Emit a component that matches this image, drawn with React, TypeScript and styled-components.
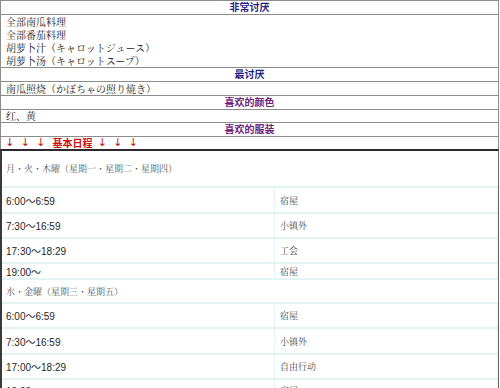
import React from 'react';
import styled, { createGlobalStyle } from 'styled-components';

const GlobalStyle = createGlobalStyle`
  html, body {
    margin: 0;
    padding: 0;
    background: #ffffff;
  }
  body {
    width: 500px;
    height: 388px;
    overflow: hidden;
  }
`;

const serif = `"Noto Serif CJK SC", "Noto Sans CJK SC", serif`;
const sans = `"Liberation Sans", "Noto Sans CJK SC", sans-serif`;

const Page = styled.div`
  width: 499px;
`;

const TopTable = styled.div`
  border: 1px solid #8c8c8c;
  border-bottom: none;
  display: flex;
  flex-direction: column;
`;

const HeadRow = styled.div<{ $tone: 'blue' | 'purple' }>`
  height: 13px;
  line-height: 13px;
  border-bottom: 1px solid #8c8c8c;
  text-align: center;
  font-family: ${sans};
  font-weight: bold;
  font-size: 10px;
  color: ${p => (p.$tone === 'blue' ? '#1f1f86' : '#72207a')};
`;

const ItemBlock = styled.div<{ $lh?: number }>`
  border-bottom: 1px solid #8c8c8c;
  padding-left: 5px;
  font-family: ${serif};
  font-size: 10px;
  line-height: ${p => p.$lh ?? 13}px;
  color: #222;
`;

const Item = styled.div`
  white-space: nowrap;
`;

const ArrowRow = styled.div`
  height: 12px;
  display: flex;
  align-items: center;
  padding-left: 1px;
  color: #cc1111;
  font-family: ${sans};
  font-weight: bold;
  font-size: 10px;
`;

const Arrow = styled.span`
  width: 15.5px;
  text-align: center;
  font-family: "DejaVu Sans", sans-serif;
  font-weight: normal;
  font-size: 11px;
  line-height: 12px;
`;

const ArrowTitle = styled.span<{ $ml: number; $mr: number }>`
  margin-left: ${p => p.$ml}px;
  margin-right: ${p => p.$mr}px;
  font-family: "Noto Sans CJK SC", sans-serif;
  line-height: 12px;
`;

const Schedule = styled.div`
  border-top: 2px solid #2a2a2a;
  border-left: 2px solid #3a3a3a;
  border-right: 1px solid #6a6a6a;
  box-sizing: border-box;
  width: 499px;
`;

const DayRow = styled.div<{ $h: number }>`
  height: ${p => p.$h}px;
  border-bottom: 2px solid #e1f3f3;
  display: flex;
  align-items: center;
  padding-left: 4px;
  font-family: ${serif};
  font-size: 9px;
  color: #555;
  white-space: nowrap;
`;

const TimeRow = styled.div<{ $h: number }>`
  height: ${p => p.$h}px;
  border-bottom: 2px solid #e1f3f3;
  display: grid;
  grid-template-columns: 273px 1fr;
`;

const TimeCell = styled.div`
  display: flex;
  align-items: center;
  padding-left: 4px;
  border-right: 1px solid #e4f4f4;
  font-family: ${sans};
  font-size: 10px;
  color: #1e1e1e;
`;

const PlaceCell = styled.div`
  display: flex;
  align-items: center;
  padding-left: 5px;
  border-right: 1px solid #e4f4f4;
  font-family: ${serif};
  font-size: 9px;
  color: #444;
`;

type Slot = { time: string; place: string; h: number };

const mon: Slot[] = [
  { time: '6:00〜6:59', place: '宿屋', h: 24 },
  { time: '7:30〜16:59', place: '小镇外', h: 23 },
  { time: '17:30〜18:29', place: '工会', h: 23 },
  { time: '19:00〜', place: '宿屋', h: 14 },
];

const wed: Slot[] = [
  { time: '6:00〜6:59', place: '宿屋', h: 23 },
  { time: '7:30〜16:59', place: '小镇外', h: 24 },
  { time: '17:00〜18:29', place: '自由行动', h: 23 },
  { time: '19:00〜', place: '宿屋', h: 20 },
];

const Slots: React.FC<{ list: Slot[] }> = ({ list }) => (
  <>
    {list.map((s, i) => (
      <TimeRow key={i} $h={s.h}>
        <TimeCell>{s.time}</TimeCell>
        <PlaceCell>{s.place}</PlaceCell>
      </TimeRow>
    ))}
  </>
);

export const App: React.FC = () => {
  return (
    <Page>
      <GlobalStyle />
      <TopTable>
        <HeadRow $tone="blue">非常讨厌</HeadRow>
        <ItemBlock>
          <Item>全部南瓜料理</Item>
          <Item>全部番茄料理</Item>
          <Item>胡萝卜汁（キャロットジュース）</Item>
          <Item>胡萝卜汤（キャロットスープ）</Item>
        </ItemBlock>
        <HeadRow $tone="blue">最讨厌</HeadRow>
        <ItemBlock>
          <Item>南瓜照烧（かぼちゃの照り焼き）</Item>
        </ItemBlock>
        <HeadRow $tone="purple">喜欢的颜色</HeadRow>
        <ItemBlock $lh={12}>
          <Item>红、黄</Item>
        </ItemBlock>
        <HeadRow $tone="purple">喜欢的服装</HeadRow>
        <ArrowRow>
          <Arrow>↓</Arrow>
          <Arrow>↓</Arrow>
          <Arrow>↓</Arrow>
          <ArrowTitle $ml={4} $mr={2}>基本日程</ArrowTitle>
          <Arrow>↓</Arrow>
          <Arrow>↓</Arrow>
          <Arrow>↓</Arrow>
        </ArrowRow>
      </TopTable>
      <Schedule>
        <DayRow $h={35}>月・火・木曜（星期一・星期二・星期四）</DayRow>
        <Slots list={mon} />
        <DayRow $h={22}>水・金曜（星期三・星期五）</DayRow>
        <Slots list={wed} />
      </Schedule>
    </Page>
  );
};

export default App;
